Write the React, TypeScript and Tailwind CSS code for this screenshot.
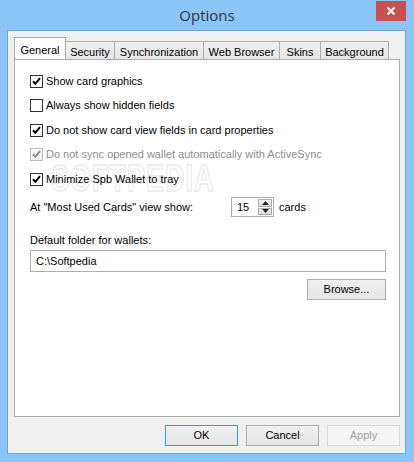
import React from "react";

const font = { fontFamily: '"Liberation Sans", Arial, sans-serif' };

function CheckBox({ checked, disabled }: { checked: boolean; disabled?: boolean }) {
  return (
    <div
      className={`w-[13px] h-[13px] border flex items-center justify-center shrink-0 ${
        disabled ? "border-[#bcbcbc] bg-[#f4f4f4]" : "border-[#333333] bg-white"
      }`}
    >
      {checked && (
        <svg width="9" height="9" viewBox="0 0 9 9">
          <path
            d="M1 4.2 L3.4 6.8 L8 1.2"
            fill="none"
            stroke={disabled ? "#8f8f8f" : "#000"}
            strokeWidth="2"
          />
        </svg>
      )}
    </div>
  );
}

function Row({ label, checked, disabled }: { label: string; checked: boolean; disabled?: boolean }) {
  return (
    <div className="flex items-center h-[16px] gap-[3px] relative z-10">
      <CheckBox checked={checked} disabled={disabled} />
      <span className={`text-[11px] leading-none whitespace-nowrap ${disabled ? "text-[#8d8d8d]" : "text-black"}`}>{label}</span>
    </div>
  );
}

function Tab({ label, selected, w }: { label: string; selected?: boolean; w: string }) {
  if (selected) {
    return (
      <div className={`${w} h-[22px] pt-[4px] bg-white border border-b-0 border-[#acacac] text-[11px] text-black relative z-10 mb-[-1px] text-center whitespace-nowrap`}>
        {label}
      </div>
    );
  }
  return (
    <div className={`${w} h-[18px] mt-[4px] pt-[2px] bg-gradient-to-b from-[#f0f0f0] to-[#e5e5e5] border border-b-0 border-[#acacac] border-l-0 text-[11px] text-black text-center whitespace-nowrap`}>
      {label}
    </div>
  );
}

function Btn({ label, variant }: { label: string; variant?: "focus" | "disabled" }) {
  const border =
    variant === "focus" ? "border-[#3399ff]" : variant === "disabled" ? "border-[#d9d9d9]" : "border-[#acacac]";
  const text = variant === "disabled" ? "text-[#a0a0a0]" : "text-black";
  const bg = variant === "disabled" ? "bg-[#f4f4f4]" : "bg-gradient-to-b from-[#f0f0f0] to-[#e5e5e5]";
  return (
    <div className={`w-[73px] h-[21px] border ${border} ${bg} ${text} text-[11px] flex items-center justify-center`}>
      {label}
    </div>
  );
}

export default function App() {
  return (
    <div className="w-[414px] h-[462px] bg-[#8bc4f7] flex flex-col" style={font}>
      <div className="h-[30px] relative flex items-center justify-center">
        <span className="text-[15px] text-[#333] mt-[1px]" style={{ fontFamily: '"Open Sans", "Noto Sans", sans-serif' }}>
          Options
        </span>
        <div className="absolute right-[8px] top-[1px] w-[30px] h-[20px] bg-[#c75050] flex items-center justify-center">
          <svg width="10" height="10" viewBox="0 0 10 10">
            <path d="M1.5 1.5 L8.5 8.5 M8.5 1.5 L1.5 8.5" stroke="#fff" strokeWidth="2" />
          </svg>
        </div>
      </div>
      <div className="ml-[7px] w-[399px] h-[424px] border border-[#6ea6d9] bg-[#f0f0f0] flex flex-col pl-[6px] pt-[6px]">
        <div className="flex items-start h-[22px]">
          <Tab label="General" selected w="w-[52px]" />
          <Tab label="Security" w="w-[49px]" />
          <Tab label="Synchronization" w="w-[89px]" />
          <Tab label="Web Browser" w="w-[76px]" />
          <Tab label="Skins" w="w-[41px]" />
          <Tab label="Background" w="w-[68px]" />
        </div>
        <div className="relative w-[386px] h-[358px] bg-white border border-[#acacac] flex flex-col pl-[15px] pt-[13px]">
          <div
            aria-hidden="true"
            className="absolute left-[36px] top-[101px] text-[27px] font-bold leading-none text-white tracking-[1px] [-webkit-text-stroke:1px_#e9e9e9] select-none scale-y-[1.35] origin-top-left"
            style={{ fontFamily: '"Liberation Sans", Arial, sans-serif' }}
          >
            SOFTPEDIA
          </div>
          <div className="flex flex-col gap-[8.5px]">
            <Row label="Show card graphics" checked />
            <Row label="Always show hidden fields" checked={false} />
            <Row label="Do not show card view fields in card properties" checked />
            <Row label="Do not sync opened wallet automatically with ActiveSync" checked disabled />
            <Row label="Minimize Spb Wallet to tray" checked />
          </div>
          <div className="flex items-center mt-[10px] h-[20px]">
            <span className="text-[11px] w-[201px] whitespace-nowrap">At "Most Used Cards" view show:</span>
            <div className="w-[43px] h-[20px] border border-[#abadb3] bg-white flex">
              <div className="flex-1 text-[11px] flex items-center pl-[5px]">15</div>
              <div className="w-[16px] flex flex-col p-[1px] gap-[1px]">
                <div className="flex-1 bg-gradient-to-b from-[#f2f2f2] to-[#dcdcdc] border border-[#acacac] flex items-center justify-center">
                  <svg width="7" height="4" viewBox="0 0 7 4"><path d="M0 4 L3.5 0 L7 4 Z" fill="#222" /></svg>
                </div>
                <div className="flex-1 bg-gradient-to-b from-[#f2f2f2] to-[#dcdcdc] border border-[#acacac] flex items-center justify-center">
                  <svg width="7" height="4" viewBox="0 0 7 4"><path d="M0 0 L3.5 4 L7 0 Z" fill="#222" /></svg>
                </div>
              </div>
            </div>
            <span className="text-[11px] ml-[5px]">cards</span>
          </div>
          <div className="text-[11px] mt-[16px] h-[14px] leading-[14px]">Default folder for wallets:</div>
          <div className="mt-[3px] w-[356px] h-[22px] border border-[#abadb3] bg-white text-[11px] flex items-center pl-[5px]">
            C:\Softpedia
          </div>
          <div className="mt-[7px] w-[356px] flex justify-end">
            <div className="w-[79px] h-[21px] border border-[#acacac] bg-gradient-to-b from-[#f0f0f0] to-[#e5e5e5] text-[11px] flex items-center justify-center">
              Browse...
            </div>
          </div>
        </div>
        <div className="flex justify-end gap-[8px] mt-[8px] w-[386px]">
          <Btn label="OK" variant="focus" />
          <Btn label="Cancel" />
          <Btn label="Apply" variant="disabled" />
        </div>
      </div>
    </div>
  );
}
